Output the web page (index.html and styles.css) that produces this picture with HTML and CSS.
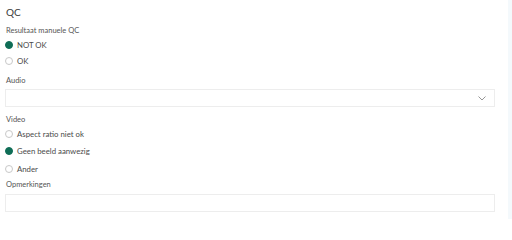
FILE: index.html
```html
<!DOCTYPE html>
<html>
<head>
<meta charset="utf-8">
<link rel="stylesheet" href="styles.css">
</head>
<body>
<div class="page">
  <main class="form">
    <h2 class="title">QC</h2>
    <div class="label">Resultaat manuele QC</div>
    <div class="group first">
      <div class="radio"><span class="dot on"></span><span>NOT OK</span></div>
      <div class="radio"><span class="dot"></span><span>OK</span></div>
    </div>
    <div class="label">Audio</div>
    <div class="box select">
      <svg class="chev" width="8" height="5" viewBox="0 0 8 5"><path d="M0.5 0.5 L4 4 L7.5 0.5" fill="none" stroke="#8a8a8a" stroke-width="0.9"/></svg>
    </div>
    <div class="label">Video</div>
    <div class="group second">
      <div class="radio"><span class="dot"></span><span>Aspect ratio niet ok</span></div>
      <div class="radio"><span class="dot on"></span><span>Geen beeld aanwezig</span></div>
      <div class="radio"><span class="dot"></span><span>Ander</span></div>
    </div>
    <div class="label">Opmerkingen</div>
    <div class="box note"></div>
  </main>
  <aside class="side"></aside>
</div>
</body>
</html>
```
FILE: styles.css
```css
html, body {
  margin: 0;
  padding: 0;
  background: #ffffff;
}
body {
  font-family: "Lato", "Open Sans", sans-serif;
  color: #4a4a4a;
}
.page {
  display: flex;
  width: 512px;
  height: 219px;
  overflow: hidden;
}
.form {
  flex: 1;
  padding: 5px 13px 0 5px;
  display: flex;
  flex-direction: column;
}
.side {
  width: 4px;
  background: #f4f9fc;
}
.title {
  margin: 0 0 7px 1px;
  font-size: 10px;
  font-weight: 400;
  color: #3a3a3a;
  line-height: 14px;
  height: 14px;
}
.label {
  font-size: 7.5px;
  line-height: 10px;
  height: 10px;
  margin-left: 1px;
  color: #555555;
}
.group {
  display: flex;
  flex-direction: column;
}
.group.first {
  margin: 1px 0 7px 0;
}
.group.first .radio { height: 16px; }
.group.second {
  margin: 0 0 2px 0;
}
.radio {
  display: flex;
  align-items: center;
  gap: 4px;
  height: 17.5px;
  font-size: 7.8px;
  color: #4a4a4a;
}
.dot {
  width: 6px;
  height: 6px;
  border-radius: 50%;
  border: 0.8px solid #c8c8c8;
  background: #fff;
  box-sizing: content-box;
}
.dot.on {
  background: #0f6d56;
  border-color: #0f6d56;
}
.box {
  height: 16px;
  border: 1px solid #ededed;
  display: flex;
  align-items: center;
  justify-content: flex-end;
  padding-right: 8px;
}
.box.select { margin: 3px 0 8px 0; }
.box.note { margin: 4px 0 0 0; }
.chev { display: block; }
```
